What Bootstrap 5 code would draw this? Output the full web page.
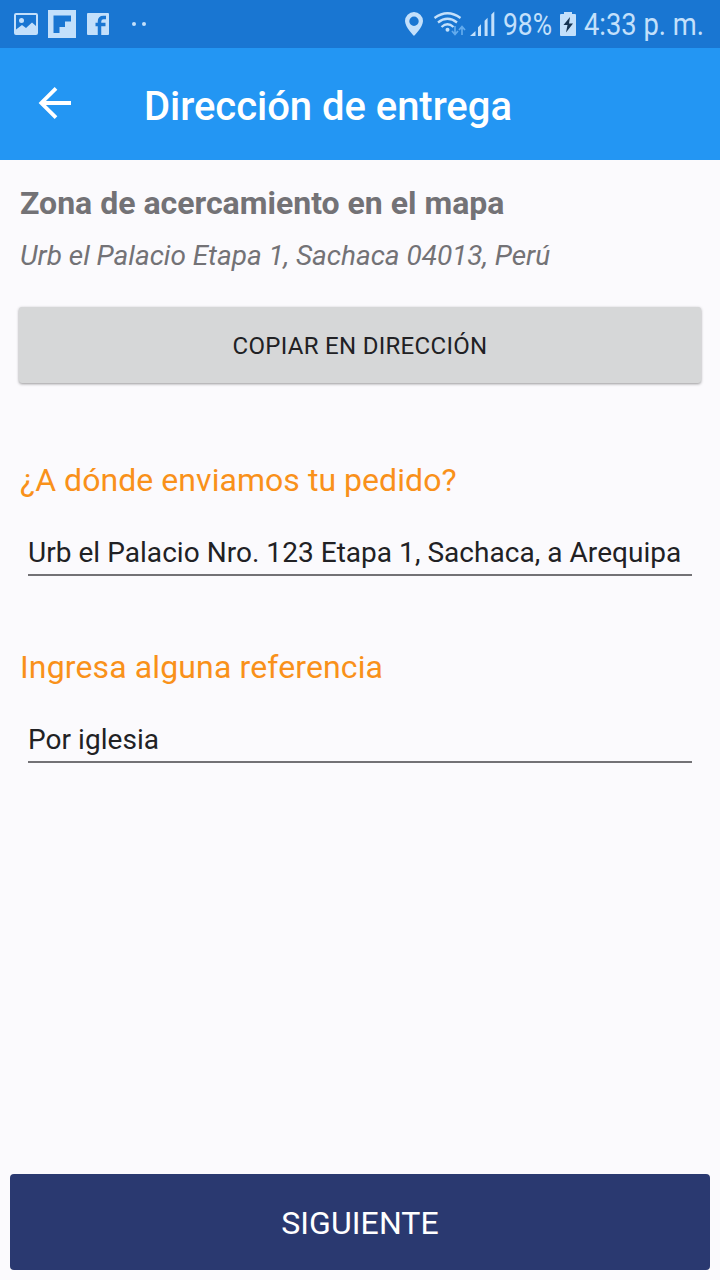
<!DOCTYPE html>
<html lang="es">
<head>
<meta charset="utf-8">
<meta name="viewport" content="width=device-width, initial-scale=1">
<title>Dirección de entrega</title>
<link href="https://cdn.jsdelivr.net/npm/bootstrap@5.3.0/dist/css/bootstrap.min.css" rel="stylesheet">
<style>
body{font-family:Roboto,"Liberation Sans",sans-serif;background:#fbfafd;color:#212124;height:1280px;overflow:hidden}
.status{height:48px;background:#1976d2}
.appbar{height:112px;background:#2396f3;padding:0 0 0 30px}
.appbar h1{font-size:40px;line-height:48px;font-weight:500;letter-spacing:-.04px;margin:5px 0 0 66px}
.zone{font-size:32px;line-height:40px;font-weight:700;color:#737276;margin:23px 20px 0}
.addr{font-size:28px;line-height:36px;letter-spacing:-.03px;color:#737276;margin:15px 20px 0}
.copy{margin:33px 19px 0;height:76px;padding:8px 0 6px;font-size:24px;letter-spacing:.3px;border-radius:3px;border:0;background:#d6d7d8;color:#212124;box-shadow:0 1px 3px rgba(0,0,0,.4)}
.ask{font-size:32px;line-height:40px;letter-spacing:.05px;color:#f9911a;margin:0 20px}
.ask-ref{letter-spacing:.13px;margin-top:71px}
.ask-dir{margin-top:77px}
.field{font-size:28px;line-height:34px;height:42px;padding:0 0 4px;margin:34px 28px 0;width:664px;letter-spacing:.04px;color:#212124;border:0;border-bottom:2px solid #737276;border-radius:0;background:none}
.next{margin:0 10px 10px;height:96px;padding:8px 0 6px;font-size:32px;letter-spacing:.1px;border:0;border-radius:4px;background:#2a3970;color:#fff}
svg{display:block}
</style>
</head>
<body class="d-flex flex-column">
<header class="status d-flex justify-content-between flex-shrink-0">
  <svg width="160" height="48" fill="#c3e0fb">
    <path fill-rule="evenodd" d="M16 13h20a2 2 0 0 1 2 2v18a2 2 0 0 1-2 2H16a2 2 0 0 1-2-2V15a2 2 0 0 1 2-2zM16 15v14.500l6-4.500 4 3 6-5.500 4 3.500V15z"/>
    <circle cx="21.500" cy="20.500" r="2.500"/>
    <path fill-rule="evenodd" d="M48 10h28v28H48zM53.500 15.500V33h6v-6H65v-5.500h6v-6z"/>
    <rect x="87" y="13" width="22" height="22" rx="1"/>
    <path d="M99.500 35V21.500q0-4 4-4h2.500M95.500 24.500h10" fill="none" stroke="#1976d2" stroke-width="3.500"/>
    <circle cx="134" cy="24" r="2"/><circle cx="144" cy="24" r="2"/>
  </svg>
  <svg width="325" height="48" viewBox="395 0 325 48" fill="#c3e0fb">
    <path fill-rule="evenodd" d="M414 12a9 9 0 0 1 9 9c0 6-9 15-9 15s-9-9-9-15a9 9 0 0 1 9-9zm0 4.500a4.700 4.700 0 1 0 0 9.400 4.700 4.700 0 0 0 0-9.400z"/>
    <g fill="none" stroke="#c3e0fb" stroke-width="2.300">
      <path d="M434.500 18q13-9.500 26 0M438 22.500q9.500-7.500 19 0M441.500 27q6-5.500 12 0"/>
    </g>
    <circle cx="447.500" cy="29.800" r="2"/>
    <g fill="none" stroke="#63abed" stroke-width="1.700"><path d="M455 26v8M452 31l3 3.500 3-3.500M462 35v-8M459 30l3-3.500 3 3.500"/></g>
    <path d="M470 36l5.500-5V36zM478 27.300l3-3V36h-3zM484.600 20.800l3-3V36h-3zM491.300 14.500l3-3V36h-3z"/>
    <text x="503" y="35" font-size="31" textLength="49" lengthAdjust="spacingAndGlyphs">98%</text>
    <path d="M561 14h3v-2h8v2h3q1 0 1 1v20q0 1-1 1h-14q-1 0-1-1V15q0-1 1-1z"/>
    <path fill="#173452" d="M570 17l-6.500 8h4l-1.500 7.500 7-9h-4z"/>
    <text x="584" y="35" font-size="31" textLength="120" lengthAdjust="spacingAndGlyphs">4:33 p. m.</text>
  </svg>
</header>
<nav class="appbar d-flex align-items-center flex-shrink-0 text-white">
  <svg width="48" height="48" viewBox="30 80 48 48" fill="none" stroke="#fff" stroke-width="3.800"><path d="M71 103H41M56 88.300L41.300 103 56 117.700"/></svg>
  <h1>Dirección de entrega</h1>
</nav>
<main class="d-flex flex-column flex-grow-1">
  <h2 class="zone">Zona de acercamiento en el mapa</h2>
  <p class="addr fst-italic">Urb el Palacio Etapa 1, Sachaca 04013, Perú</p>
  <button class="btn copy" type="button">COPIAR EN DIRECCIÓN</button>
  <label class="ask ask-dir" for="dir">¿A dónde enviamos tu pedido?</label>
  <input id="dir" class="form-control field" value="Urb el Palacio Nro. 123 Etapa 1, Sachaca, a Arequipa">
  <label class="ask ask-ref" for="ref">Ingresa alguna referencia</label>
  <input id="ref" class="form-control field" value="Por iglesia">
  <button class="btn next mt-auto" type="button">SIGUIENTE</button>
</main>
<script src="https://cdn.jsdelivr.net/npm/bootstrap@5.3.0/dist/js/bootstrap.bundle.min.js"></script>
</body>
</html>
